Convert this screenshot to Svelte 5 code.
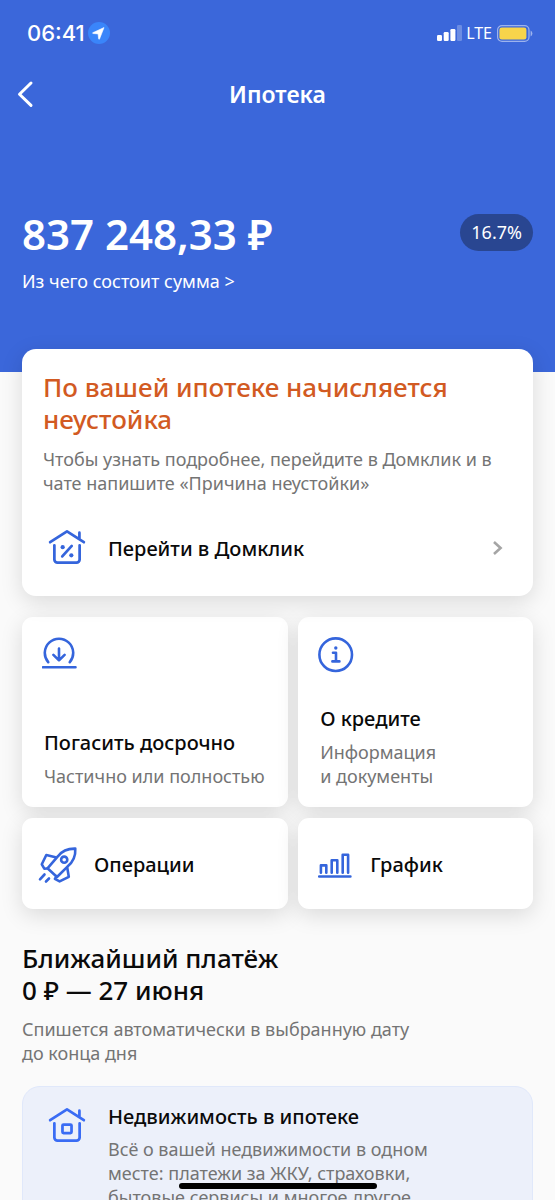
<script lang="ts">
	const amount = '837 248,33 ₽';
	const rate = '16.7%';
	const payment = { sum: '0 ₽', date: '27 июня' };
</script>

<div class="screen">
	<div class="scroll">
		<header>
			<div class="status">
				<span class="time">06:41</span>
				<svg class="location" width="22" height="22" viewBox="0 0 22 22" aria-hidden="true">
					<circle cx="11" cy="11" r="11" fill="#3a85fa" />
					<path d="M16 5.6 4.8 10.7q-.7.5.3.8l5 .4.5 4.9q.3 1 .9.2z" fill="#fff" stroke="#fff" stroke-width=".6" stroke-linejoin="round" />
				</svg>
				<svg class="signal" width="25" height="16" viewBox="0 0 25 16" fill="#fff" aria-hidden="true">
					<rect x="0" y="10" width="5" height="6" rx="1.2" />
					<rect x="6.7" y="7" width="5" height="9" rx="1.2" />
					<rect x="13.4" y="4" width="5" height="12" rx="1.2" />
					<rect x="20" y="0" width="5" height="16" rx="1.2" opacity=".25" />
				</svg>
				<span class="network">LTE</span>
				<svg width="36" height="17" viewBox="0 0 36 17" aria-hidden="true">
					<rect x=".6" y=".6" width="31.4" height="15.8" rx="4.4" fill="none" stroke="#9db3ed" stroke-width="1.2" />
					<rect x="2.4" y="2.4" width="27" height="12.2" rx="2.4" fill="#f7d44b" />
					<path d="M33.6 5.6q1.8 1 1.8 2.9t-1.8 2.9z" fill="#9db3ed" />
				</svg>
			</div>

			<nav>
				<button class="back" aria-label="Назад">
					<svg width="17" height="28" viewBox="0 0 17 28" fill="none" stroke="#fff" stroke-width="3" stroke-linecap="round" stroke-linejoin="round">
						<path d="M14 3 2.5 14.2 14 25.4" />
					</svg>
				</button>
				<h1>Ипотека</h1>
			</nav>

			<div class="balance">
				<span class="amount">{amount}</span>
				<span class="rate">{rate}</span>
			</div>
			<a class="details" href="#details">Из чего состоит сумма &gt;</a>
		</header>

		<main>
			<section class="card notice">
				<h2>По вашей ипотеке начисляется неустойка</h2>
				<p>Чтобы узнать подробнее, перейдите в Домклик и в чате напишите «Причина неустойки»</p>
				<a class="go" href="#domclick">
					<svg class="icon" width="40" height="40" viewBox="1 1 38 38">
						<path d="M4 14.5 20 4.2l16 10.3M31.8 11.5V5.5M8 17.5V31a3 3 0 0 0 3 3h18a3 3 0 0 0 3-3V17.5M15.5 28l9-10" />
						<circle class="dot" cx="15.9" cy="19.2" r="2" />
						<circle class="dot" cx="24.1" cy="27" r="2" />
					</svg>
					<span>Перейти в Домклик</span>
					<svg class="arrow" width="12" height="16" viewBox="0 0 12 16">
						<path d="m2 2 6.6 6L2 14" />
					</svg>
				</a>
			</section>

			<div class="tiles">
				<a class="card tile" href="#repay">
					<svg class="icon" width="36" height="36" viewBox="0 0 36 36">
						<path d="M6.2 25.2A14.2 14.2 0 1 1 27.8 25.2M1 30.3h32.5M17 11.5v11.7M11.4 17.8l5.6 5.6 5.6-5.6" />
					</svg>
					<span class="text">
						<strong>Погасить досрочно</strong>
						<small>Частично или полностью</small>
					</span>
				</a>
				<a class="card tile" href="#about">
					<svg class="icon" width="36" height="36" viewBox="0 0 36 36">
						<circle cx="17.7" cy="17.7" r="16.3" />
						<path d="M15 15.8h3v8.5M14.4 24.4h7" />
						<circle class="dot" cx="17.8" cy="11" r="1.7" />
					</svg>
					<span class="text">
						<strong>О кредите</strong>
						<small>Информация<br />и документы</small>
					</span>
				</a>
				<a class="card tile row" href="#operations">
					<svg class="icon" width="40" height="40" viewBox="0 0 40 40">
						<path d="M9.5 23.3 20 11.2Q26 3.3 37.3 3.6 38 14.5 29.5 21.6L19 32z" />
						<circle cx="26.2" cy="14.7" r="3.1" />
						<path d="M17.5 12.3 8.3 10 3.8 19.3 6.3 23.7 9 23.5M29.3 23l1.5 8.8-9.2 4.6-4.7-2.5L18.7 31" />
						<path d="M6.5 29.5 2 34.3M11 33.5l-3 3" />
					</svg>
					<strong>Операции</strong>
				</a>
				<a class="card tile row" href="#chart">
					<svg class="icon" width="40" height="40" viewBox="0 0 40 40">
						<path d="M5.2 31.5h31.2M6.9 27.8v-7.4h5.4v7.4M17.7 27.8V15.3h5.6v12.5M28.7 27.8V9.7h5.4v18.1" />
					</svg>
					<strong>График</strong>
				</a>
			</div>

			<section class="payment">
				<h2>Ближайший платёж<br />{payment.sum} — {payment.date}</h2>
				<p>Спишется автоматически в выбранную дату<br />до конца дня</p>
			</section>

			<a class="estate" href="#estate">
				<svg class="icon bright" width="40" height="40" viewBox="1 1 38 38">
					<path d="M4 14.5 20 4.2l16 10.3M31.8 11.5V5.5M8 17.5V31a3 3 0 0 0 3 3h18a3 3 0 0 0 3-3V17.5" />
					<rect x="15.7" y="18.6" width="8.6" height="8.2" rx="1" />
				</svg>
				<span class="text">
					<strong>Недвижимость в ипотеке</strong>
					<small>Всё о вашей недвижимости в одном месте: платежи за ЖКУ, страховки, бытовые сервисы и многое другое</small>
				</span>
			</a>
		</main>
	</div>
	<div class="home"></div>
</div>

<style>
	:global(body) {
		background: #fafafa;
	}
	.screen {
		position: relative;
		height: 100vh;
		overflow: hidden;
		font-family: 'Noto Sans', sans-serif;
		color: #0a0a0a;
	}
	.scroll {
		height: 100%;
		overflow-y: auto;
		scrollbar-width: none;
	}
	h1,
	h2,
	p {
		margin: 0;
	}
	a {
		color: inherit;
		text-decoration: none;
	}
	svg {
		flex: none;
	}

	/* Blue top part */
	header {
		padding: 19px 22px 79px;
		background: #3b67da;
		color: #fff;
	}
	.status {
		display: flex;
		align-items: center;
		height: 28px;
		padding-left: 5px;
	}
	.time {
		font: 500 22px/28px Inter, sans-serif;
	}
	.location {
		margin-left: 3px;
	}
	.signal {
		margin-left: auto;
	}
	.network {
		margin: 0 5px 0 4px;
		font-size: 16px;
	}
	nav {
		display: grid;
		grid-template-columns: 28px 1fr 28px;
		align-items: center;
		margin: 31px 0 104px;
	}
	.back {
		display: flex;
		margin-left: -5px;
		padding: 0;
		border: 0;
		background: none;
		cursor: pointer;
	}
	h1 {
		font-size: 23px;
		font-weight: 600;
		line-height: 32px;
		text-align: center;
	}
	.balance {
		display: flex;
		align-items: flex-start;
		justify-content: space-between;
	}
	.amount {
		font-size: 42px;
		font-weight: 600;
		line-height: 40px;
	}
	.rate {
		padding: 6px 11px;
		border-radius: 20px;
		background: #294691;
		font-size: 18px;
		line-height: 25px;
	}
	.details {
		display: block;
		margin-top: 15px;
		font-size: 18px;
		line-height: 24px;
	}

	/* Cards */
	main {
		padding: 0 22px 40px;
	}
	.card {
		border-radius: 11px;
		background: #fff;
		box-shadow: 0 6px 22px rgba(0, 0, 0, 0.13);
	}
	.icon {
		fill: none;
		stroke: #3565dc;
		stroke-width: 2.6;
		stroke-linecap: round;
		stroke-linejoin: round;
	}
	.icon.bright {
		stroke: #3a6cf4;
	}
	.dot {
		fill: #3565dc;
		stroke: none;
	}
	strong {
		font-size: 20px;
		font-weight: 500;
		line-height: 28px;
	}
	h2 {
		font-size: 26px;
		font-weight: 500;
		line-height: 32px;
	}
	p,
	small {
		font-size: 18px;
		line-height: 24px;
		color: #747474;
	}
	.text {
		display: flex;
		flex-direction: column;
	}
	.notice {
		position: relative;
		margin-top: -23px;
		padding: 22px 21px;
		border-radius: 14px;
	}
	.notice h2 {
		color: #d25a22;
	}
	.notice p {
		margin: 12px 0 27px;
	}
	.go {
		display: flex;
		align-items: center;
		gap: 21px;
		height: 52px;
		padding-left: 4px;
		font-size: 20px;
		font-weight: 500;
	}
	.arrow {
		margin-left: auto;
		margin-right: 8px;
		fill: none;
		stroke: #a5a5a5;
		stroke-width: 2.6;
	}
	.tiles {
		display: grid;
		grid-template-columns: 17fr 15fr;
		gap: 11px 10px;
		margin-top: 21px;
	}
	.tile {
		display: flex;
		flex-direction: column;
		justify-content: space-between;
		min-height: 151px;
		padding: 20px 20px 19px;
	}
	.tile .text {
		gap: 7px;
		padding-left: 2px;
	}
	.row {
		flex-direction: row;
		align-items: center;
		justify-content: flex-start;
		gap: 16px;
		min-height: 51px;
		padding: 21px 16px 19px;
	}
	.payment {
		margin: 33px 0 21px;
	}
	.payment p {
		margin-top: 11px;
	}

	.estate {
		display: flex;
		align-items: flex-start;
		gap: 21px;
		padding: 16px 80px 22px 24px;
		border: 1px solid #e0e8fa;
		border-radius: 18px;
		background: #ecf0fa;
	}
	.estate .icon {
		margin-top: 3px;
	}
	.estate .text {
		gap: 6px;
	}

	/* Home indicator, stays over the scrolled content */
	.home {
		position: absolute;
		bottom: 11px;
		left: 50%;
		width: 198px;
		height: 6px;
		margin-left: -99px;
		border-radius: 3px;
		background: #000;
	}
</style>
